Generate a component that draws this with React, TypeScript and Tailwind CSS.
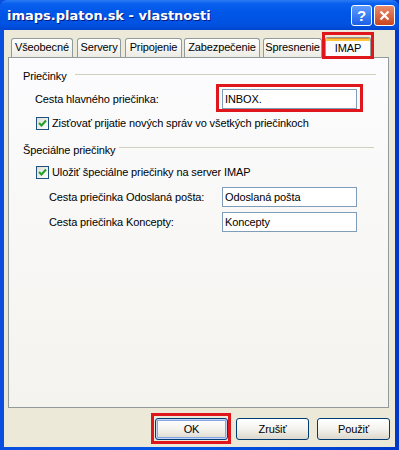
import React from "react";

const tabs = [
  { label: "Všeobecné", w: 62, ml: 3 },
  { label: "Servery", w: 44, ml: 4 },
  { label: "Pripojenie", w: 57, ml: 4 },
  { label: "Zabezpečenie", w: 76, ml: 2 },
  { label: "Spresnenie", w: 59, ml: 3 },
];

function Check() {
  return (
    <div className="w-[13px] h-[13px] border border-[#1c5180] bg-gradient-to-br from-[#dcdcd7] to-[#ffffff] flex items-center justify-center shrink-0">
      <svg width="9" height="9" viewBox="0 0 9 9">
        <path d="M1 4 L3.5 6.5 L8 1.5" stroke="#21a121" strokeWidth="2" fill="none" />
      </svg>
    </div>
  );
}

function Btn({ children, def }: { children: React.ReactNode; def?: boolean }) {
  return (
    <div
      className={
        "w-[73px] h-[22px] rounded-[3px] border border-[#003c74] bg-gradient-to-b from-[#ffffff] via-[#f4f3ee] to-[#dcd8cc] flex items-center justify-center text-black " +
        (def ? "shadow-[inset_0_0_0_1px_#c4d5f6,inset_0_0_0_2px_#86a5e6]" : "")
      }
    >
      {children}
    </div>
  );
}

export default function App() {
  return (
    <div
      className="relative w-[399px] h-[450px] flex flex-col bg-gradient-to-r from-[#0a4ee0] via-[#0055e5] to-[#0038c8] text-[11px] tracking-[-0.12px] text-black"
      style={{ fontFamily: '"Liberation Sans", Arial, sans-serif' }}
    >
      {/* title bar */}
      <div className="h-[30px] shrink-0 flex items-center pl-[7px] pr-[4px] bg-[linear-gradient(to_bottom,#2a7bf5_0%,#0a60ee_12%,#0056e8_40%,#0052e2_80%,#0046d0_100%)] rounded-t-[7px]">
        <div
          className="text-white font-bold text-[13px] tracking-[0px] [text-shadow:1px_1px_0_#0a1883] flex-1 leading-none"
          style={{ fontFamily: '"DejaVu Sans", sans-serif' }}
        >
          imaps.platon.sk - vlastnosti
        </div>
        <div className="w-[21px] h-[21px] rounded-[3px] border border-white bg-gradient-to-b from-[#5f9cff] to-[#1a5ee8] flex items-center justify-center text-white font-bold text-[15px] leading-none mr-[2px]">
          ?
        </div>
        <div className="w-[21px] h-[21px] rounded-[3px] border border-white bg-gradient-to-b from-[#e98a6a] to-[#c8441c] flex items-center justify-center">
          <svg width="11" height="11" viewBox="0 0 11 11">
            <path d="M1.5 1.5 L9.5 9.5 M9.5 1.5 L1.5 9.5" stroke="white" strokeWidth="2.2" />
          </svg>
        </div>
      </div>

      {/* client */}
      <div className="flex-1 flex flex-col bg-[#ece9d8] mx-[4px] mb-[3px] pt-[7px]">
        {/* tab row */}
        <div className="flex items-end h-[20px] ml-[4px] relative z-10">
          {tabs.map((t) => (
            <div
              key={t.label}
              style={{ width: t.w, marginLeft: t.ml }}
              className="h-[19px] border border-b-0 border-[#919b9c] rounded-t-[3px] bg-gradient-to-b from-[#ffffff] to-[#ecebe5] flex items-center justify-center leading-none pb-[1px]"
            >
              {t.label}
            </div>
          ))}
          <div className="w-[46px] h-[21px] ml-[3px] mb-[-1px] border border-b-0 border-[#919b9c] rounded-t-[3px] bg-[#fcfcfe] flex flex-col overflow-hidden">
            <div className="h-[1px] bg-[#e68b2c]" />
            <div className="h-[2px] bg-[#ffc73c]" />
            <div className="flex-1 flex items-center justify-center leading-none pb-[2px]">IMAP</div>
          </div>
        </div>

        {/* panel */}
        <div className="ml-[4px] w-[381px] h-[351px] border border-[#919b9c] bg-gradient-to-b from-[#fcfcfe] to-[#f4f3ee] flex flex-col pt-[12px] pl-[14px] leading-[13px]">
          <div className="flex items-start h-[13px]">
            <span>Priečinky</span>
            <div className="ml-[8px] mt-[4px] w-[301px] h-[1px] bg-[#d0d0bf]" />
          </div>
          <div className="flex items-center mt-[6px] h-[20px] pl-[12px]">
            <span className="w-[187px]">Cesta hlavného priečinka:</span>
            <div className="w-[135px] h-[20px] border border-[#7f9db9] bg-white flex items-center pl-[2px]">INBOX.</div>
          </div>
          <div className="flex items-center mt-[8px] pl-[13px] gap-[3px]">
            <Check />
            <span>Zisťovať prijatie nových správ vo všetkých priečinkoch</span>
          </div>

          <div className="flex items-start h-[13px] mt-[14px]">
            <span>Špeciálne priečinky</span>
            <div className="ml-[3px] mt-[3px] w-[255px] h-[1px] bg-[#d0d0bf]" />
          </div>
          <div className="flex items-center mt-[9px] pl-[13px] gap-[3px]">
            <Check />
            <span>Uložiť špeciálne priečinky na server IMAP</span>
          </div>
          <div className="flex items-center mt-[8px] h-[20px] pl-[26px]">
            <span className="w-[173px]">Cesta priečinka Odoslaná pošta:</span>
            <div className="w-[135px] h-[20px] border border-[#7f9db9] bg-white flex items-center pl-[2px]">Odoslaná pošta</div>
          </div>
          <div className="flex items-center mt-[5px] h-[20px] pl-[26px]">
            <span className="w-[173px]">Cesta priečinka Koncepty:</span>
            <div className="w-[135px] h-[20px] border border-[#7f9db9] bg-white flex items-center pl-[2px]">Koncepty</div>
          </div>
        </div>

        {/* buttons */}
        <div className="flex justify-end gap-[8px] mt-[10px] pr-[5px]">
          <Btn def>OK</Btn>
          <Btn>Zrušiť</Btn>
          <Btn>Použiť</Btn>
        </div>
      </div>

      {/* red annotation rectangles */}
      <div className="absolute left-[322px] top-[32px] w-[52px] h-[27px] border-[3px] border-[#e0161d] z-20" />
      <div className="absolute left-[216px] top-[84px] w-[147px] h-[28px] border-[3px] border-[#e0161d] z-20" />
      <div className="absolute left-[151px] top-[413px] w-[80px] h-[31px] border-[3px] border-[#e0161d] z-20" />
    </div>
  );
}
